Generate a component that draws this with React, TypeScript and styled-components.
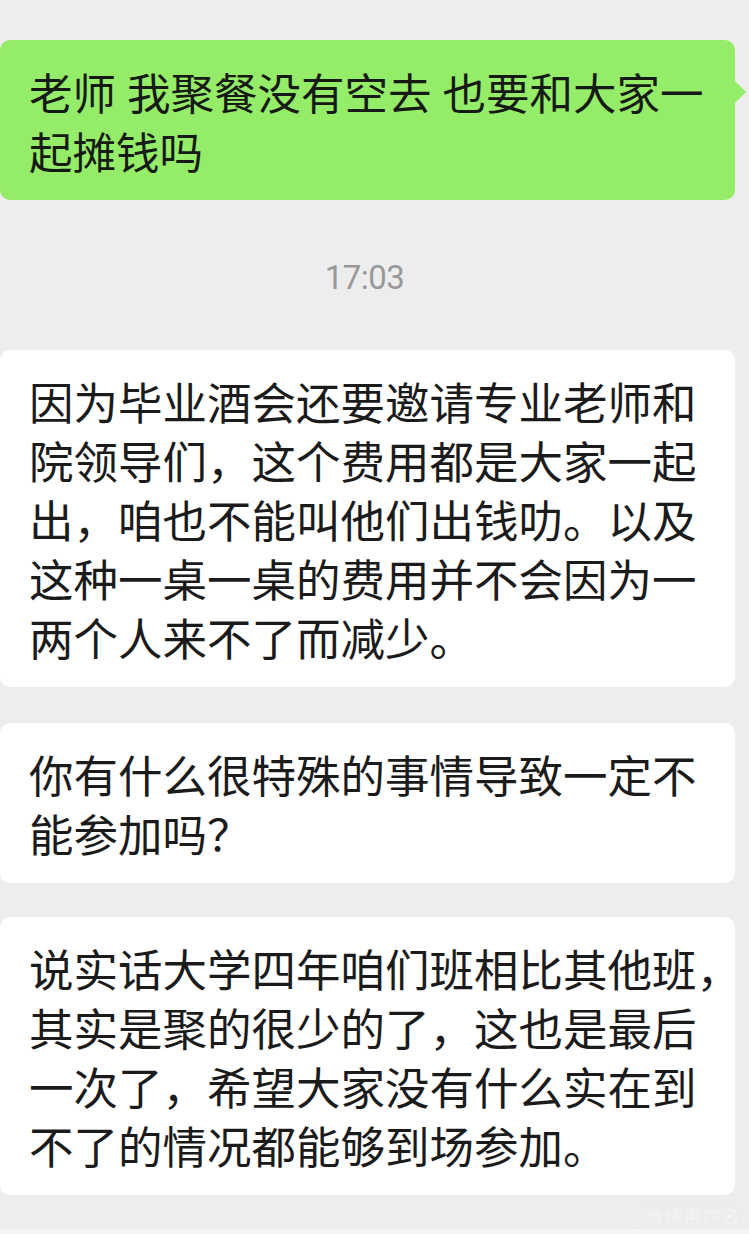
import React from "react";
import styled, { createGlobalStyle } from "styled-components";

const Global = createGlobalStyle`
  html, body {
    margin: 0;
    padding: 0;
    background: #ededed;
  }
  body {
    font-family: "Noto Sans CJK SC", "Noto Sans", sans-serif;
  }
`;

const Page = styled.div`
  position: relative;
  width: 749px;
  min-height: 1234px;
  box-sizing: border-box;
  padding-top: 40px;
  background: #ededed;
  display: flex;
  flex-direction: column;
  overflow: hidden;
`;

const Bubble = styled.div<{ $mine?: boolean; $gapTop?: number }>`
  position: relative;
  width: 735px;
  box-sizing: border-box;
  margin-top: ${(p) => p.$gapTop ?? 0}px;
  padding: ${(p) => (p.$mine ? "22px 0 20px 29px" : "21px 0 21px 29px")};
  border-radius: 10px;
  background: ${(p) => (p.$mine ? "#95ec69" : "#ffffff")};
  color: ${(p) => (p.$mine ? "#151a12" : "#1b1b1b")};
  font-family: "Noto Sans CJK SC", "Noto Sans", sans-serif;
  font-size: ${(p) => (p.$mine ? "43.5px" : "44.5px")};
  line-height: 59px;
  ${(p) =>
    p.$mine
      ? `
  &::after {
    content: "";
    position: absolute;
    right: -11px;
    top: 40px;
    width: 0;
    height: 0;
    border-top: 12px solid transparent;
    border-bottom: 12px solid transparent;
    border-left: 12px solid #95ec69;
  }`
      : ""}
`;

const Line = styled.div`
  display: block;
  white-space: nowrap;
`;

const Gap = styled.span`
  display: inline-block;
  width: 11px;
`;

const TimeRow = styled.div`
  height: 150px;
  display: flex;
  align-items: center;
  justify-content: center;
  padding-right: 20px;
  padding-top: 4px;
  box-sizing: border-box;
`;

const Time = styled.span`
  font-family: Roboto, "Liberation Sans", sans-serif;
  font-size: 33px;
  letter-spacing: -0.5px;
  color: #999999;
`;

const Watermark = styled.div`
  position: absolute;
  right: 8px;
  bottom: 6px;
  font-family: "Noto Sans CJK SC", sans-serif;
  font-size: 17px;
  letter-spacing: 2px;
  color: #ffffff;
  opacity: 0.85;
  filter: blur(1.2px);
  text-shadow: 0 0 2px #d0d0d0;
`;

const BottomStrip = styled.div`
  position: absolute;
  left: 0;
  right: 0;
  bottom: 0;
  height: 5px;
  background: #f4f4f4;
`;

type Msg = { lines: string[]; gap: number };

const messages: Msg[] = [
  {
    gap: 0,
    lines: [
      "因为毕业酒会还要邀请专业老师和",
      "院领导们，这个费用都是大家一起",
      "出，咱也不能叫他们出钱叻。以及",
      "这种一桌一桌的费用并不会因为一",
      "两个人来不了而减少。",
    ],
  },
  {
    gap: 36,
    lines: ["你有什么很特殊的事情导致一定不", "能参加吗？"],
  },
  {
    gap: 34,
    lines: [
      "说实话大学四年咱们班相比其他班，",
      "其实是聚的很少的了，这也是最后",
      "一次了，希望大家没有什么实在到",
      "不了的情况都能够到场参加。",
    ],
  },
];

export default function App() {
  return (
    <>
      <Global />
      <Page>
        <Bubble $mine>
          <Line>
            老师<Gap />我聚餐没有空去<Gap />也要和大家一
          </Line>
          <Line>起摊钱吗</Line>
        </Bubble>
        <TimeRow>
          <Time>17:03</Time>
        </TimeRow>
        {messages.map((m, i) => (
          <Bubble key={i} $gapTop={m.gap}>
            {m.lines.map((l, j) => (
              <Line key={j}>{l}</Line>
            ))}
          </Bubble>
        ))}
        <BottomStrip />
        <Watermark>@微博用户名</Watermark>
      </Page>
    </>
  );
}
